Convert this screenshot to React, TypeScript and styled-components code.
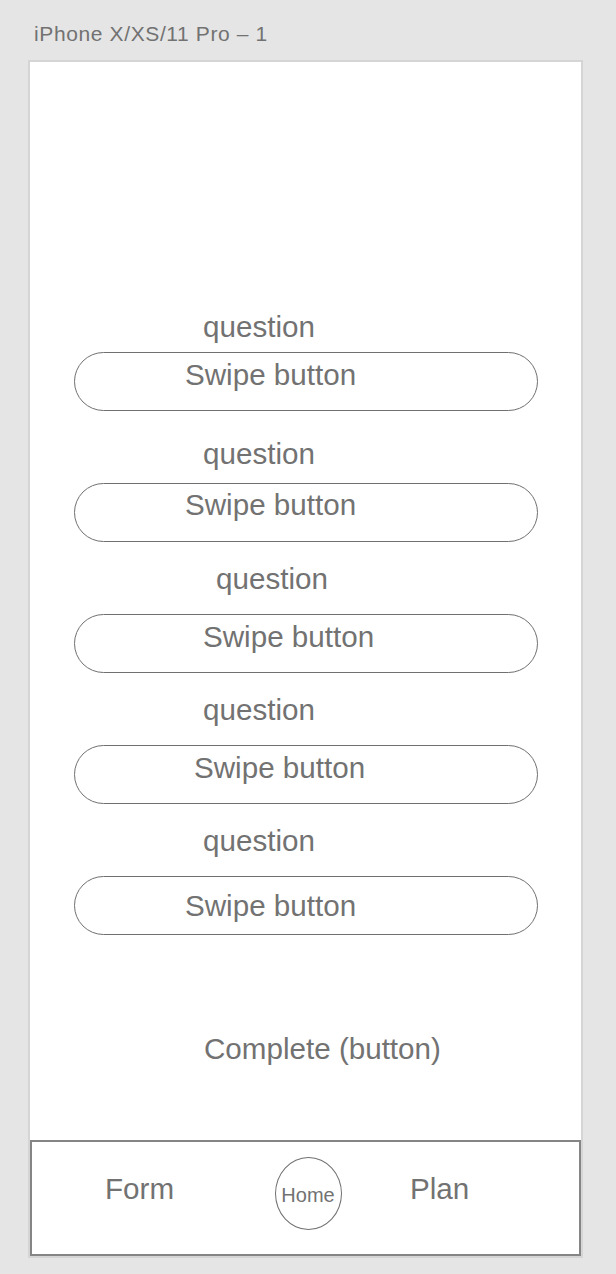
import React from "react";
import styled, { createGlobalStyle } from "styled-components";

const GlobalStyle = createGlobalStyle`
  html, body {
    margin: 0;
    padding: 0;
    background: #e5e5e5;
  }
  body {
    font-family: "Liberation Sans", Arial, Helvetica, sans-serif;
    color: #707070;
  }
`;

const Page = styled.div`
  width: 616px;
  height: 1274px;
  box-sizing: border-box;
  padding-top: 22px;
  background: #e5e5e5;
  overflow: hidden;
`;

const ArtboardTitle = styled.div`
  margin-left: 34px;
  height: 24px;
  font-size: 21px;
  line-height: 24px;
  letter-spacing: 0.62px;
  color: #727272;
`;

const Frame = styled.div`
  margin: 14px 0 0 28px;
  width: 555px;
  height: 1198px;
  box-sizing: border-box;
  border: 2px solid #d5d5d5;
  background: #ffffff;
  display: flex;
  flex-direction: column;
`;

const Content = styled.div`
  flex: 1;
  padding-top: 248px;
  display: flex;
  flex-direction: column;
  align-items: flex-start;
`;

const Question = styled.div<{ $x: number; $top: number }>`
  margin-left: ${(p) => p.$x}px;
  margin-top: ${(p) => p.$top}px;
  height: 34px;
  font-size: 29.6px;
  line-height: 34px;
  white-space: nowrap;
  color: #727272;
`;

const SwipeButton = styled.div<{ $gap: number; $textX: number; $textY: number }>`
  margin-left: 44px;
  margin-top: ${(p) => p.$gap}px;
  width: 464px;
  height: 59px;
  box-sizing: border-box;
  border: 1px solid #707070;
  border-radius: 30px;
  padding-left: ${(p) => p.$textX}px;
  padding-top: ${(p) => p.$textY}px;
  font-size: 29.6px;
  line-height: 34px;
  white-space: nowrap;
  color: #727272;
`;

const CompleteButton = styled.div`
  margin-left: 174px;
  margin-top: 97px;
  font-size: 29.6px;
  line-height: 34px;
  white-space: nowrap;
  color: #727272;
`;

const NavBar = styled.nav`
  margin-top: auto;
  height: 116px;
  box-sizing: border-box;
  border: 2px solid #858585;
  display: flex;
  align-items: flex-start;
`;

const NavLabel = styled.div<{ $left: number }>`
  margin-left: ${(p) => p.$left}px;
  margin-top: 30px;
  font-size: 29.6px;
  line-height: 34px;
  white-space: nowrap;
  color: #727272;
`;

const HomeBubble = styled.div<{ $left: number }>`
  margin-left: ${(p) => p.$left}px;
  margin-top: 15px;
  width: 67px;
  height: 73px;
  box-sizing: border-box;
  border: 1px solid #707070;
  border-radius: 50%;
  display: flex;
  align-items: center;
  justify-content: center;
  padding: 4px 1px 0 0;
  font-size: 20px;
  line-height: 23px;
  color: #727272;
`;

type Row = {
  qx: number;
  qTop: number;
  gap: number;
  tx: number;
  ty: number;
};

const rows: Row[] = [
  { qx: 173, qTop: 0, gap: 8, tx: 110, ty: 5 },
  { qx: 173, qTop: 26, gap: 12, tx: 110, ty: 4 },
  { qx: 186, qTop: 20, gap: 18, tx: 128, ty: 5 },
  { qx: 173, qTop: 20, gap: 18, tx: 119, ty: 5 },
  { qx: 173, qTop: 20, gap: 18, tx: 110, ty: 12 },
];

export default function App() {
  return (
    <>
      <GlobalStyle />
      <Page>
        <ArtboardTitle>iPhone X/XS/11 Pro – 1</ArtboardTitle>
        <Frame>
          <Content>
            {rows.map((r, i) => (
              <React.Fragment key={i}>
                <Question $x={r.qx} $top={r.qTop}>
                  question
                </Question>
                <SwipeButton $gap={r.gap} $textX={r.tx} $textY={r.ty}>
                  Swipe button
                </SwipeButton>
              </React.Fragment>
            ))}
            <CompleteButton>Complete (button)</CompleteButton>
          </Content>
          <NavBar>
            <NavLabel $left={73}>Form</NavLabel>
            <HomeBubble $left={101}>Home</HomeBubble>
            <NavLabel $left={68}>Plan</NavLabel>
          </NavBar>
        </Frame>
      </Page>
    </>
  );
}
